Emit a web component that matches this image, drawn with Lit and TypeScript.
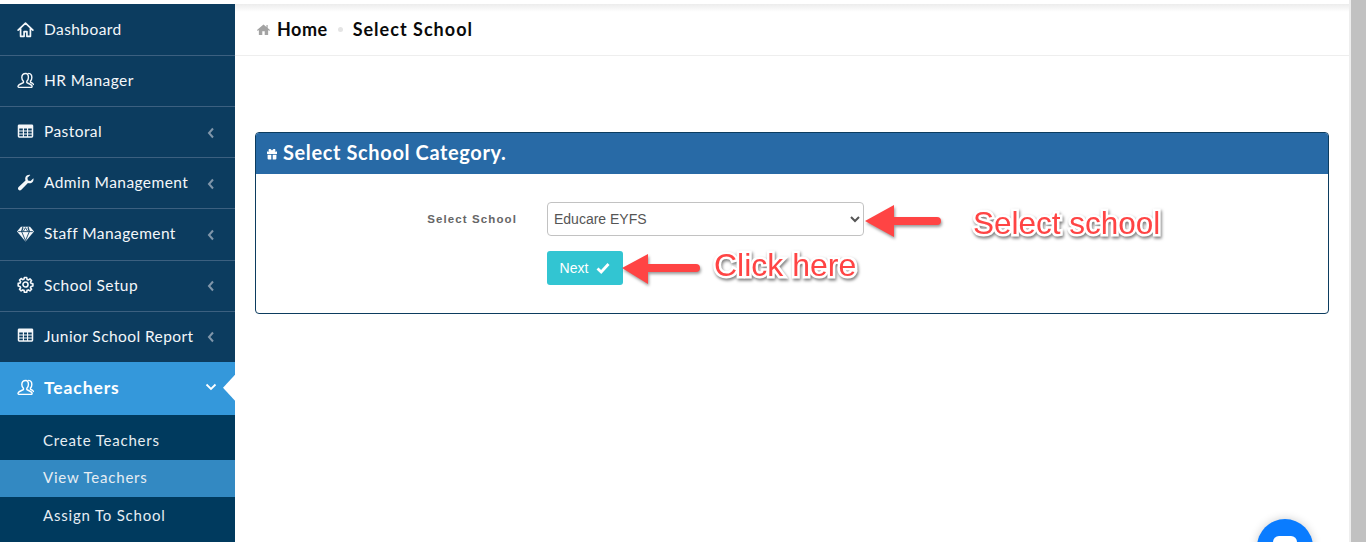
import { LitElement, html, css, svg } from "lit";
import { customElement } from "lit/decorators.js";

const icons: Record<string, unknown> = {
  home: svg`<path d="M1.200 9.600 9 2.200l7.800 7.400M3.800 8v8.200h3.700v-5h3v5h3.700V8" fill="none" stroke="currentColor" stroke-width="1.800" stroke-linejoin="round" stroke-linecap="round"/>`,
  user: svg`<path d="M9.300 1.500c-2.500 0-4.200 1.800-4.200 4.300 0 1.700.7 3.100 1.700 4v1.500c-1.300.7-4.900 1.500-5.600 3.300-.3.700 0 1.700.8 1.700h13c.8 0 1.200-.9.900-1.600-.7-1.700-4.200-2.700-5.500-3.400V9.800c1-.9 1.700-2.300 1.700-4 0-2.500-1-4.300-2.800-4.300z" fill="none" stroke="currentColor" stroke-width="1.500"/><path d="M12.400 1.500c2.100.3 3.300 2 3.300 4.200 0 1.600-.6 2.900-1.400 3.700v1.500c1 .5 2.500 1.100 3.200 2.300" fill="none" stroke="currentColor" stroke-width="1.500" stroke-linecap="round"/>`,
  table: svg`<path fill-rule="evenodd" d="M.8 3A1.500 1.500 0 0 1 2.300 1.500h13.400A1.500 1.500 0 0 1 17.200 3v11a1.500 1.500 0 0 1-1.500 1.500H2.300A1.500 1.500 0 0 1 .8 14zM2.400 5.700v2.200h3.800V5.700zm5 0v2.200h3.200V5.700zm4.400 0v2.200h3.800V5.700zM2.400 9v2h3.800V9zm5 0v2h3.200V9zm4.400 0v2h3.800V9zM2.400 12.100v1.800h3.800v-1.800zm5 0v1.800h3.200v-1.800zm4.400 0v1.800h3.800v-1.800z" fill="currentColor"/>`,
  wrench: svg`<path d="M17.400 4.400c.5 2.300-.5 4.300-2.300 5.100-1.200.5-2.400.4-3.500 0l-7 7.300c-.9.900-2.200.9-3 0s-.8-2.100.1-3L9 6.900c-.5-1.100-.5-2.400 0-3.600C10 1.400 12 .6 14.100 1L11 4.100l.6 2.800 2.800.6z" fill="currentColor"/>`,
  diamond: svg`<path d="M4.200 1.800h9.600L18 7 9 17.500 0 7z" fill="currentColor"/><path d="M1.200 7h15.600M6 2.200 4.900 7 9 16.500 13.100 7 12 2.200M4.900 7 6.600 2.800M13.100 7 11.400 2.800M6.500 7 9 2.800l2.500 4.200" fill="none" stroke="#0c3c5f" stroke-width=".9"/>`,
  cog: svg`<path d="M7.700 1.200h2.600l.4 2.100c.5.100 1 .3 1.400.6l1.800-1.200 1.800 1.800-1.200 1.800c.3.400.5.900.6 1.400l2.100.4v2.600l-2.100.4c-.1.500-.3 1-.6 1.400l1.200 1.800-1.800 1.800-1.800-1.200c-.4.300-.9.500-1.400.6l-.4 2.100H7.700l-.4-2.100c-.5-.1-1-.3-1.400-.6l-1.800 1.200-1.800-1.800 1.200-1.800c-.3-.4-.5-.9-.6-1.400l-2.100-.4V7.700l2.100-.4c.1-.5.300-1 .6-1.400L2.300 4.100l1.800-1.800 1.800 1.200c.4-.3.9-.5 1.400-.6z" transform="translate(.5 .5) scale(.95)" fill="none" stroke="currentColor" stroke-width="1.800" stroke-linejoin="round"/><circle cx="9" cy="9" r="2.700" fill="none" stroke="currentColor" stroke-width="1.700"/>`,
};

const ico = (name: string) =>
  html`<svg class="ico" viewBox="0 0 18 18" aria-hidden="true">${icons[name]}</svg>`;

const chevLeft = html`<svg class="chev" viewBox="0 0 8 12"><path d="M6 1.500 2 6l4 4.500" fill="none" stroke="currentColor" stroke-width="2"/></svg>`;
const chevDown = html`<svg class="chev down" viewBox="0 0 12 8"><path d="M1.500 1.500 6 6l4.500-4.500" fill="none" stroke="currentColor" stroke-width="1.800"/></svg>`;

const menu: { label: string; icon: string; chev?: boolean; last?: boolean }[] = [
  { label: "Dashboard", icon: "home" },
  { label: "HR Manager", icon: "user" },
  { label: "Pastoral", icon: "table", chev: true },
  { label: "Admin Management", icon: "wrench", chev: true },
  { label: "Staff Management", icon: "diamond", chev: true },
  { label: "School Setup", icon: "cog", chev: true },
  { label: "Junior School Report", icon: "table", chev: true, last: true },
];

@customElement("app-root")
export class AppRoot extends LitElement {
  static styles = css`
    :host {
      display: block;
      height: 542px;
      overflow: hidden;
      position: relative;
      background: #fff;
      font-family: "Lato", "Noto Sans", sans-serif;
    }
    .page { display: flex; height: 542px; }
    .side {
      width: 235px;
      flex: none;
      margin-top: 4px;
      padding-top: 1px;
      background: #0c3c5f;
      color: #f4f7fa;
      overflow: hidden;
      box-sizing: border-box;
    }
    .row {
      height: 51.12px;
      box-sizing: border-box;
      border-bottom: 1px solid #3c6080;
      display: flex;
      align-items: center;
      padding: 0 17px 2px 17px;
      font-size: 15.500px;
      letter-spacing: .42px;
    }
    .row.last { height: 50.200px; border-bottom: 0; }
    .row .label { margin-left: 10px; flex: 1; white-space: nowrap; }
    .ico { width: 17px; height: 17px; flex: none; }
    .chev { width: 8px; height: 12px; color: #8096aa; flex: none; margin-top: 3px; margin-right: 3px; }
    .chev.down { width: 12px; height: 8px; color: #fff; margin-right: 1px; margin-top: 0; }
    .active {
      position: relative;
      height: 53px;
      background: #3498db;
      border: 0;
      font-weight: 700;
      font-size: 17.500px;
      letter-spacing: .9px;
      color: #fff;
    }
    .active::after {
      content: "";
      position: absolute;
      right: 0;
      top: 13px;
      width: 12px;
      height: 26px;
      background: #fff;
      clip-path: polygon(100% 0, 0 50%, 100% 100%);
    }
    .sub { background: #003a5e; padding-top: 8px; height: 130px; }
    .sub div {
      height: 37px;
      padding: 0 0 3px 43px;
      box-sizing: border-box;
      display: flex;
      align-items: center;
      font-size: 15px;
      letter-spacing: .8px;
      color: #e6edf3;
    }
    .sub div:last-child { padding-bottom: 1px; }
    .sub .on { background: #3389c2; }
    .main { flex: 1; min-width: 0; display: flex; flex-direction: column; }
    .crumbs {
      margin-top: 4px;
      height: 52px;
      box-sizing: border-box;
      border-bottom: 1px solid #eee;
      background: linear-gradient(#ececec, #fff 8px);
      display: flex;
      align-items: center;
      padding: 0 0 2px 22px;
      font-size: 18px;
      font-weight: 700;
      letter-spacing: .5px;
      color: #0a0a0a;
    }
    .crumbs .cur { letter-spacing: 1.02px; }
    .crumbs svg { width: 13px; height: 13px; color: #a3a3a3; margin-right: 7px; margin-top: 2px; }
    .crumbs i { width: 5px; height: 5px; border-radius: 50%; background: #e4e4e4; margin: 2px 10px 0 10px; }
    .content { padding: 76px 20px 0 20px; }
    .card {
      border: 1px solid #0c3c5f;
      border-radius: 4px;
      height: 182px;
      box-sizing: border-box;
      overflow: hidden;
    }
    .head {
      height: 41px;
      background: #286aa6;
      color: #fff;
      display: flex;
      align-items: center;
      padding: 0 0 4px 10px;
      box-sizing: border-box;
      font-size: 20px;
      font-weight: 700;
      letter-spacing: .62px;
    }
    .head svg { width: 12px; height: 12px; margin-right: 5px; margin-top: 5px; }
    .form {
      display: grid;
      grid-template-columns: 261px 317px;
      column-gap: 30px;
      row-gap: 15px;
      padding-top: 28px;
      align-items: center;
      font-family: "Liberation Sans", Arial, sans-serif;
    }
    label {
      text-align: right;
      font-size: 11.500px;
      font-weight: 700;
      letter-spacing: 1.100px;
      color: #666;
    }
    select {
      width: 317px;
      height: 34px;
      box-sizing: border-box;
      border: 1px solid #c2c2c2;
      border-radius: 4px;
      background: #fff;
      color: #555;
      font: 14px "Liberation Sans", Arial, sans-serif;
      padding: 0 2px;
    }
    button {
      grid-column: 2;
      width: 76px;
      height: 34px;
      border: 0;
      border-radius: 3px;
      background: #32c5d2;
      color: #fff;
      font: 14px "Liberation Sans", Arial, sans-serif;
      display: flex;
      align-items: center;
      justify-content: center;
      gap: 8px;
      padding: 0;
    }
    button svg { width: 14px; height: 12px; }
    .scroll { width: 17px; flex: none; background: #eee; padding-left: 2px; box-sizing: border-box; }
    .scroll div { height: 100%; background: #c1c1c1; }
    .note {
      position: absolute;
      font: 31.500px "Liberation Sans", Arial, sans-serif;
      color: #ff4444;
      -webkit-text-stroke: 5px #fff;
      paint-order: stroke fill;
      filter: drop-shadow(1px 2px 1.500px rgba(0, 0, 0, .5));
      white-space: nowrap;
      line-height: 36px;
    }
    .note.click { font-size: 32px; }
    .arrow {
      position: absolute;
      filter: drop-shadow(1px 2px 1.500px rgba(0, 0, 0, .4));
    }
    .arrow.a1 { left: 860px; top: 200px; }
    .arrow.a2 { left: 618px; top: 248px; }
    .note.n1 { left: 973px; top: 205px; }
    .note.n2 { left: 714px; top: 247px; }
    .chat {
      position: absolute;
      left: 1257px;
      top: 519px;
      width: 56px;
      height: 56px;
      border-radius: 50%;
      background: #0a7cff;
      box-shadow: 0 0 10px rgba(0, 0, 0, .2);
    }
    .chat::after {
      content: "";
      position: absolute;
      left: 16px;
      top: 17px;
      width: 24px;
      height: 22px;
      border-radius: 6px;
      background: #fff;
    }
  `;

  render() {
    return html`
      <div class="page">
        <nav class="side">
          ${menu.map(
            (m) => html`<div class="row ${m.last ? "last" : ""}">${ico(m.icon)}<span class="label">${m.label}</span>${m.chev ? chevLeft : ""}</div>`
          )}
          <div class="row active">${ico("user")}<span class="label">Teachers</span>${chevDown}</div>
          <div class="sub">
            <div>Create Teachers</div>
            <div class="on">View Teachers</div>
            <div>Assign To School</div>
          </div>
        </nav>
        <main class="main">
          <div class="crumbs">
            <svg viewBox="0 0 14 14"><path d="M7 1.500 0 7.500l.8 1L2 7.500V13h3.700V9h2.600v4H12V7.500l1.200 1 .8-1-2.500-2.100V2.200H10.200v2z" fill="currentColor"/></svg>
            <span>Home</span><i></i><span class="cur">Select School</span>
          </div>
          <div class="content">
            <section class="card">
              <div class="head">
                <svg viewBox="0 0 12 12"><path fill-rule="evenodd" d="M1 3.500h2.300C2.500 3 2.300 2 2.900 1.300c.8-.8 2.300-.4 3.100 1.300.8-1.700 2.300-2.100 3.100-1.300.6.700.4 1.700-.4 2.200H11V6H1zM1.600 6.800h3.700V11.500H2.600a1 1 0 0 1-1-1zM6.700 6.800h3.700v3.700a1 1 0 0 1-1 1H6.700z" fill="currentColor"/></svg>
                <span>Select School Category.</span>
              </div>
              <div class="form">
                <label>Select School</label>
                <select><option>Educare EYFS</option></select>
                <button>Next <svg viewBox="0 0 14 12"><path d="M1.500 6.500 5.200 10l7.300-8" fill="none" stroke="currentColor" stroke-width="2.800"/></svg></button>
              </div>
            </section>
          </div>
        </main>
        <div class="scroll"><div></div></div>
      </div>
      <svg class="arrow a1" width="90" height="42" viewBox="0 0 90 42"><path d="M5 21 34 5v12h43a4 4 0 0 1 0 8H34v12z" fill="#ff4444"/></svg>
      <svg class="arrow a2" width="90" height="42" viewBox="0 0 90 42"><path d="M4 20 30 6v10h48a4 4 0 0 1 0 8H30v12z" fill="#ff4444"/></svg>
      <div class="note n1">Select school</div>
      <div class="note n2 click">Click here</div>
      <div class="chat"></div>
    `;
  }
}
